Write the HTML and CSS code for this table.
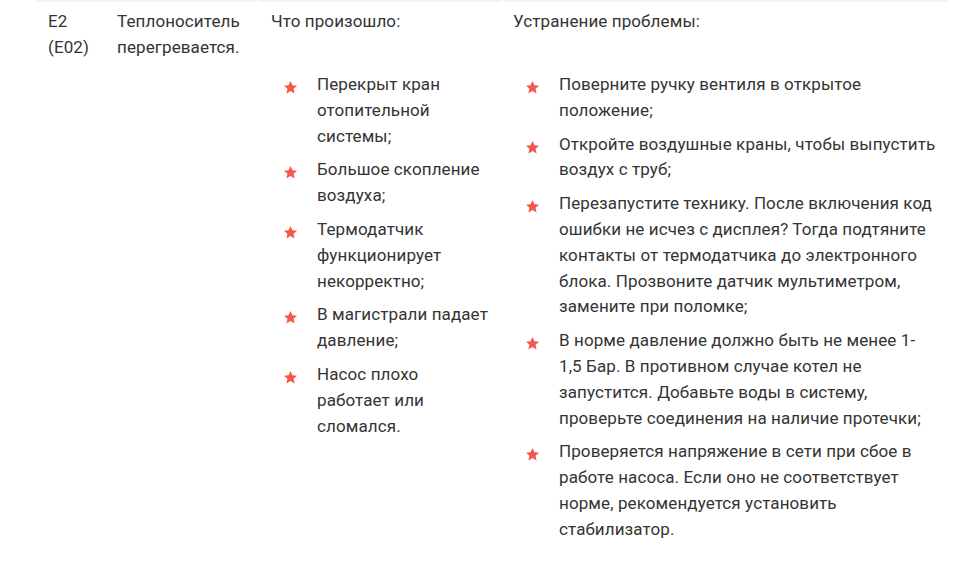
FILE: index.html
```html
<!DOCTYPE html>
<html lang="ru">
<head>
<meta charset="utf-8">
<title>Ошибки котла</title>
<link rel="stylesheet" href="styles.css">
</head>
<body>
<table class="codes">
  <colgroup>
    <col class="c-code">
    <col class="c-name">
    <col class="c-cause">
    <col class="c-fix">
  </colgroup>
  <tr class="prev">
    <td></td><td></td><td></td><td></td>
  </tr>
  <tr class="row">
    <td>E2 (E02)</td>
    <td>Теплоноситель перегревается.</td>
    <td class="cause">
      <p class="head">Что произошло:</p>
      <ul class="stars">
        <li><span class="mark"><svg viewBox="0 0 24 24"><path d="M12 1.5l3.1 6.9 7.4.7-5.6 5 1.7 7.4L12 17.7l-6.6 3.8 1.7-7.4-5.6-5 7.4-.7z"/></svg></span><span>Перекрыт кран отопительной системы;</span></li>
        <li><span class="mark"><svg viewBox="0 0 24 24"><path d="M12 1.5l3.1 6.9 7.4.7-5.6 5 1.7 7.4L12 17.7l-6.6 3.8 1.7-7.4-5.6-5 7.4-.7z"/></svg></span><span>Большое скопление воздуха;</span></li>
        <li><span class="mark"><svg viewBox="0 0 24 24"><path d="M12 1.5l3.1 6.9 7.4.7-5.6 5 1.7 7.4L12 17.7l-6.6 3.8 1.7-7.4-5.6-5 7.4-.7z"/></svg></span><span>Термодатчик функционирует некорректно;</span></li>
        <li><span class="mark"><svg viewBox="0 0 24 24"><path d="M12 1.5l3.1 6.9 7.4.7-5.6 5 1.7 7.4L12 17.7l-6.6 3.8 1.7-7.4-5.6-5 7.4-.7z"/></svg></span><span>В магистрали падает давление;</span></li>
        <li><span class="mark"><svg viewBox="0 0 24 24"><path d="M12 1.5l3.1 6.9 7.4.7-5.6 5 1.7 7.4L12 17.7l-6.6 3.8 1.7-7.4-5.6-5 7.4-.7z"/></svg></span><span>Насос плохо работает или сломался.</span></li>
      </ul>
    </td>
    <td class="fix">
      <p class="head">Устранение проблемы:</p>
      <ul class="stars">
        <li><span class="mark"><svg viewBox="0 0 24 24"><path d="M12 1.5l3.1 6.9 7.4.7-5.6 5 1.7 7.4L12 17.7l-6.6 3.8 1.7-7.4-5.6-5 7.4-.7z"/></svg></span><span>Поверните ручку вентиля в открытое положение;</span></li>
        <li><span class="mark"><svg viewBox="0 0 24 24"><path d="M12 1.5l3.1 6.9 7.4.7-5.6 5 1.7 7.4L12 17.7l-6.6 3.8 1.7-7.4-5.6-5 7.4-.7z"/></svg></span><span>Откройте воздушные краны, чтобы выпустить воздух с труб;</span></li>
        <li><span class="mark"><svg viewBox="0 0 24 24"><path d="M12 1.5l3.1 6.9 7.4.7-5.6 5 1.7 7.4L12 17.7l-6.6 3.8 1.7-7.4-5.6-5 7.4-.7z"/></svg></span><span>Перезапустите технику. После включения код ошибки не исчез с дисплея? Тогда подтяните контакты от термодатчика до электронного блока. Прозвоните датчик мультиметром, замените при поломке;</span></li>
        <li><span class="mark"><svg viewBox="0 0 24 24"><path d="M12 1.5l3.1 6.9 7.4.7-5.6 5 1.7 7.4L12 17.7l-6.6 3.8 1.7-7.4-5.6-5 7.4-.7z"/></svg></span><span>В норме давление должно быть не менее 1-1,5 Бар. В противном случае котел не запустится. Добавьте воды в систему, проверьте соединения на наличие протечки;</span></li>
        <li><span class="mark"><svg viewBox="0 0 24 24"><path d="M12 1.5l3.1 6.9 7.4.7-5.6 5 1.7 7.4L12 17.7l-6.6 3.8 1.7-7.4-5.6-5 7.4-.7z"/></svg></span><span>Проверяется напряжение в сети при сбое в работе насоса. Если оно не соответствует норме, рекомендуется установить стабилизатор.</span></li>
      </ul>
    </td>
  </tr>
</table>
</body>
</html>
```
FILE: styles.css
```css
html, body {
  margin: 0;
  padding: 0;
  background: #ffffff;
}
body {
  font-family: Roboto, "Noto Sans", sans-serif;
  font-size: 17px;
  line-height: 25.8px;
  letter-spacing: 0.1px;
  color: #343434;
  padding-left: 34px;
}
.codes {
  table-layout: fixed;
  border-collapse: separate;
  border-spacing: 2px;
  width: 915px;
  margin-top: -2px;
}
.c-code { width: 67px; }
.c-name { width: 152px; }
.c-cause { width: 243px; }
.c-fix { width: 443px; }

.prev td {
  height: 2px;
  padding: 0;
  background: #f3f3f4;
}
.row td {
  vertical-align: top;
  padding: 5px 12px 14px;
  background: #ffffff;
}
.row td.fix {
  padding-left: 9px;
  padding-right: 10px;
}
.head {
  margin: 0;
}
.stars {
  list-style: none;
  margin: 37.3px 0 0;
  padding: 0;
}
.stars li {
  display: flex;
  margin-bottom: 8px;
}
.mark {
  flex: 0 0 46px;
  display: flex;
  padding-top: 8px;
  padding-left: 12px;
  box-sizing: border-box;
}
.mark svg {
  width: 15px;
  height: 15px;
  fill: #f4584a;
}
```
